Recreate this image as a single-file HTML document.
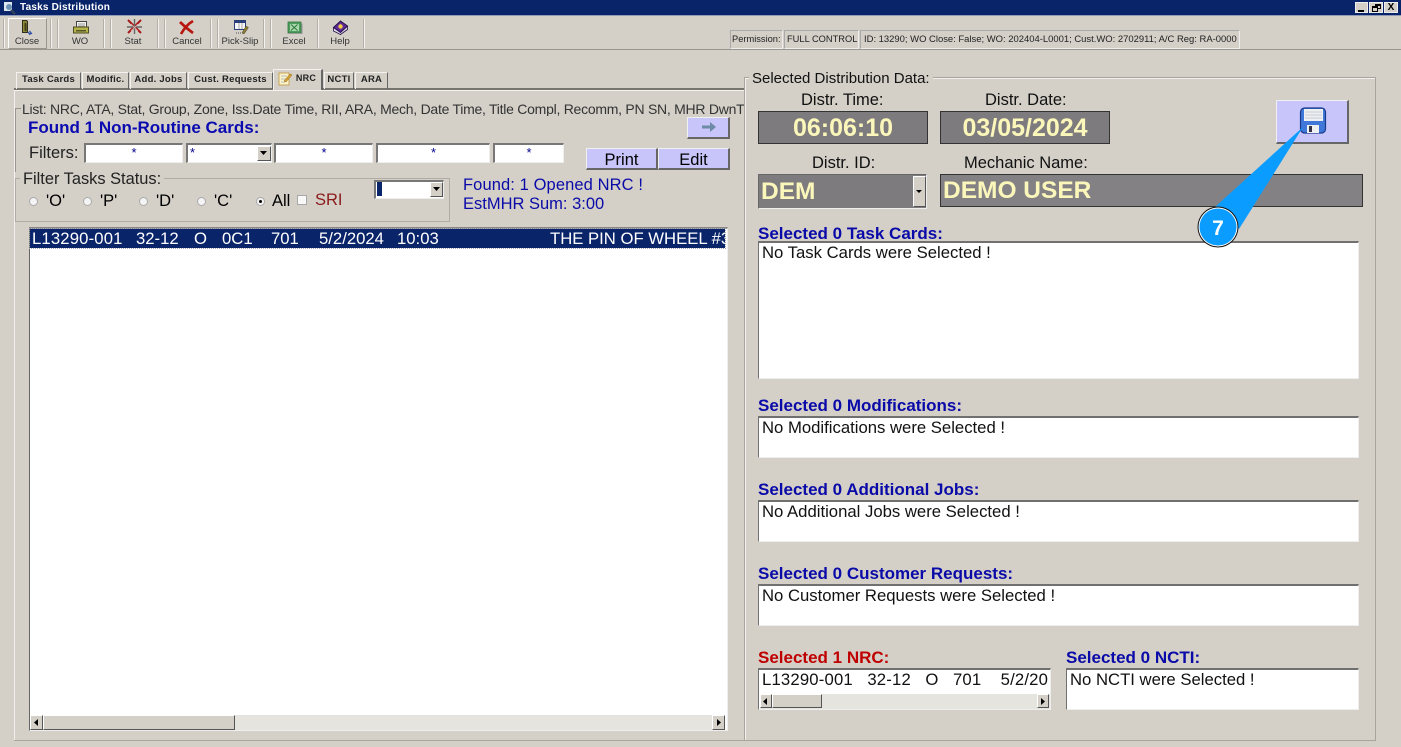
<!DOCTYPE html>
<html><head><meta charset="utf-8"><style>
html,body{margin:0;padding:0}
body{width:1401px;height:747px;position:relative;overflow:hidden;background:#d4d0c8;font-family:"Liberation Sans",sans-serif;color:#000}
div{position:absolute;box-sizing:border-box}
.t{position:absolute;white-space:nowrap;line-height:1}
.s{font-size:16.5px}
.m{font-size:16.5px;color:#111}
.r{position:absolute;top:231px;font-size:16.7px;color:#fff;white-space:nowrap;line-height:1}
.tb{font-size:9.5px;color:#333;text-align:center;width:50px;top:37px}
.sep{position:absolute;top:19px;height:29px;width:2px;border-left:1px solid #b4b0a8;border-right:1px solid #f4f2ee}
.tab{position:absolute;top:72px;height:17px;font-size:9.5px;font-weight:bold;letter-spacing:.25px;padding-top:1px;text-align:center;border-right:1px solid #666;border-top:1px solid #f4f2ee;border-left:1px solid #f4f2ee;white-space:nowrap;color:#222}
.inp{position:absolute;background:#fff;border:1px solid;border-color:#777 #eee #eee #777;border-width:2px 1px 1px 2px;color:#00008b;text-align:center;font-size:13px;line-height:16px}
.btn{position:absolute;background:#c8c5fa;border:1px solid;border-color:#f0f0f0 #666 #666 #f0f0f0;border-width:1px 2px 2px 1px;text-align:center;font-size:16.5px}
.rad{position:absolute;width:9px;height:9px;border-radius:50%;background:#f4f4f4;border:1px solid #aaa;top:197px}
.box{position:absolute;background:#fff;border:1px solid #eee;border-top:2px solid #707070;border-left:1px solid #707070;font-size:16.7px;padding:0 3px;white-space:nowrap;overflow:hidden;line-height:19px;color:#111}
.lbl{position:absolute;font-weight:bold;font-size:17px;color:#0a0aa8;white-space:nowrap;line-height:1}
.gr{position:absolute;background:#7e7b7e;border:1px solid #333;color:#fbf7bb;font-weight:bold}
.sb{position:absolute;background:#d4d0c8;border:1px solid;border-color:#fff #555 #555 #fff}
.hatch{position:absolute;background:#e6e4de}
</style></head><body>

<div style="left:0;top:0;width:1401px;height:15px;background:#0a246a"></div>
<div style="left:0;top:15px;width:1401px;height:1px;background:#8f9ab8"></div>
<svg style="position:absolute;left:2px;top:1px" width="14" height="14" viewBox="0 0 14 14"><rect x="2" y="1" width="8" height="9" fill="#dfe8ef"/><circle cx="7" cy="6" r="3" fill="#6f93b5"/><path d="M9 9l4 4" stroke="#345" stroke-width="2"/></svg>
<div class="t" style="left:20px;top:3px;font-size:10px;font-weight:bold;color:#fff;letter-spacing:.2px">Tasks Distribution</div>
<div style="left:1355px;top:2px;width:13px;height:11px;background:#d4d0c8;border:1px solid #eee"><div style="left:2px;top:7px;width:6px;height:2px;background:#000"></div></div>
<div style="left:1369px;top:2px;width:14px;height:11px;background:#d4d0c8;border:1px solid #eee"><div style="left:5px;top:1px;width:6px;height:5px;border:1px solid #000;border-top-width:2px"></div><div style="left:2px;top:3px;width:6px;height:6px;border:1px solid #000;border-top-width:2px;background:#d4d0c8"></div></div>
<div style="left:1384px;top:2px;width:14px;height:11px;background:#d4d0c8;border:1px solid #eee;font-size:10px;font-weight:bold;text-align:center;line-height:10px">X</div>

<!-- toolbar -->
<div style="left:0;top:49px;width:1401px;height:1px;background:#9a968e"></div>
<div style="left:8px;top:18px;width:39px;height:31px;border:1px solid;border-color:#fff #9a968e #9a968e #fff"></div>
<div class="sep" style="left:3px"></div><div class="sep" style="left:50px"></div><div class="sep" style="left:57px"></div><div class="sep" style="left:103px"></div><div class="sep" style="left:110px"></div><div class="sep" style="left:157px"></div><div class="sep" style="left:164px"></div><div class="sep" style="left:210px"></div><div class="sep" style="left:217px"></div><div class="sep" style="left:263px"></div><div class="sep" style="left:270px"></div><div class="sep" style="left:317px"></div><div class="sep" style="left:363px"></div>
<svg style="position:absolute;left:0;top:18px" width="370" height="20" viewBox="0 18 370 20">
<path d="M22.500 20.500h4l1 1v11h-5z" fill="#8f8a35" stroke="#2e2e1c"/><path d="M24.500 22.500l2 1v8l-2-1z" fill="#3d3d18"/><path d="M28 32q1 2 3 1.500M29.500 31l2 2.500-2.500 1" stroke="#2d4fa8" stroke-width="1.200" fill="none"/>
<path d="M76.500 27v-5.500h10V27" fill="#f2f2ee" stroke="#444"/><path d="M78 24h7M78 26h7" stroke="#999"/><rect x="73.500" y="27" width="15" height="6" fill="#b5b44a" stroke="#4d4d22"/><rect x="76" y="30" width="10" height="1.500" fill="#55552a"/>
<path d="M128 20l13 13M141 20l-13 13" stroke="#a81818" stroke-width="2"/><path d="M134.500 19v15M127 27h15" stroke="#666" stroke-width="1.400"/><path d="M131 24l7 7M138 24l-7 7" stroke="#e6b0b0" stroke-width=".8"/>
<path d="M180 22q6 6 13 11M193 21q-7 4-12 13" stroke="#b81710" stroke-width="2.700" fill="none"/>
<rect x="234.500" y="20.500" width="11" height="9" fill="#f6f6f6" stroke="#2a3f7a"/><path d="M234 22h12" stroke="#2a3f7a" stroke-width="2"/><path d="M239 23v6M242 23v6" stroke="#888" stroke-width=".7"/><path d="M242 33l4-7 2.500 1.500-4.500 6.500z" fill="#8d7a2c" stroke="#333" stroke-width=".4"/><path d="M236 33h5" stroke="#555" stroke-dasharray="1 1"/>
<rect x="288" y="22" width="13" height="11" fill="#4c9e5c" stroke="#35703f" stroke-width=".8"/><rect x="290" y="24" width="9" height="7" fill="#a9d6ab"/><path d="M291 24.500l6.500 6M297.500 24.500l-6.500 6" stroke="#2e7a3d"/><path d="M289 33.500h13v-10" stroke="#999" fill="none"/>
<path d="M333.500 28v3l7 3.500 7-5v-3z" fill="#e0dced" stroke="#241048" stroke-width=".8"/><path d="M333.500 27.500l7-6.500 7 5-7 6.500z" fill="#5f2a98" stroke="#241048"/><circle cx="340.500" cy="26.500" r="2.200" fill="#f0d040"/>
</svg>
<div class="t tb" style="left:2px">Close</div><div class="t tb" style="left:55px">WO</div><div class="t tb" style="left:108px">Stat</div><div class="t tb" style="left:162px">Cancel</div><div class="t tb" style="left:215px">Pick-Slip</div><div class="t tb" style="left:269px">Excel</div><div class="t tb" style="left:315px">Help</div>

<!-- status -->
<div style="left:730px;top:30px;width:53px;height:19px;border:1px solid;border-color:#aaa #eee #eee #aaa"></div>
<div style="left:784px;top:30px;width:75px;height:19px;border:1px solid;border-color:#aaa #eee #eee #aaa"></div>
<div style="left:860px;top:30px;width:380px;height:19px;border:1px solid;border-color:#aaa #eee #eee #aaa"></div>
<div class="t" style="left:732px;top:35px;font-size:9.300px;color:#222">Permission:</div>
<div class="t" style="left:787px;top:35px;font-size:9.300px;color:#222">FULL CONTROL</div>
<div class="t" style="left:864px;top:35px;font-size:9.450px;color:#222">ID: 13290; WO Close: False; WO: 202404-L0001; Cust.WO: 2702911; A/C Reg: RA-0000</div>

<!-- tabs -->
<div style="left:14px;top:88px;width:730px;height:2px;background:#77746c"></div>
<div style="left:14px;top:90px;width:730px;height:1px;background:#f4f2ee"></div>
<div class="tab" style="left:16px;width:65px">Task Cards</div>
<div class="tab" style="left:82px;width:47px">Modific.</div>
<div class="tab" style="left:130px;width:57px">Add. Jobs</div>
<div class="tab" style="left:188px;width:85px">Cust. Requests</div>
<div class="tab" style="left:273px;width:50px;top:69px;height:21px;background:#d4d0c8;font-size:9px;padding:3px 0 0 17px;border-right:2px solid #666">NRC</div>
<svg style="position:absolute;left:278px;top:71px" width="15" height="15" viewBox="0 0 15 15"><rect x="1" y="2" width="10" height="12" fill="#fbf3c8" stroke="#c9a55a"/><path d="M3 5h6M3 8h6M3 11h4" stroke="#bbb"/><path d="M6 10l6-7 2 1-6 7z" fill="#d9a22e" stroke="#8a6a20" stroke-width=".5"/></svg>
<div class="tab" style="left:324px;width:30px">NCTI</div>
<div class="tab" style="left:355px;width:33px">ARA</div>

<!-- left panel -->
<div style="left:14px;top:91px;width:1px;height:649px;background:#f2f0ec"></div>
<div style="left:14px;top:740px;width:730px;height:1px;background:#aaa69e"></div>
<div style="left:15px;top:108px;width:6px;height:1px;background:#9a968e"></div>
<div style="left:15px;top:108px;width:1px;height:64px;background:#9a968e"></div>
<div class="t" style="left:22px;top:102px;font-size:14px;color:#333;letter-spacing:-.26px;width:723px;overflow:hidden">List: NRC, ATA, Stat, Group, Zone, Iss.Date Time, RII, ARA, Mech, Date Time, Title Compl, Recomm, PN SN, MHR DwnT</div>
<div class="lbl" style="left:28px;top:119px;color:#0a0ab0">Found 1 Non-Routine Cards:</div>
<div class="btn" style="left:687px;top:117px;width:43px;height:22px"></div>
<svg style="position:absolute;left:700px;top:120px" width="18" height="14" viewBox="0 0 18 14"><path d="M2 5.500h8V2l6 5-6 5V8.500H2z" fill="#6d8aa6"/></svg>
<div class="t" style="left:29px;top:145px;font-size:16.500px;color:#222">Filters:</div>
<div class="inp" style="left:84px;top:143px;width:99px;height:20px">*</div>
<div class="inp" style="left:186px;top:143px;width:86px;height:20px;text-align:left;padding-left:2px">*</div>
<div class="sb" style="left:257px;top:146px;width:14px;height:15px"></div>
<svg style="position:absolute;left:260px;top:151px" width="8" height="5"><path d="M0 0h7L3.500 4z" fill="#000"/></svg>
<div class="inp" style="left:274px;top:143px;width:99px;height:20px">*</div>
<div class="inp" style="left:376px;top:143px;width:114px;height:20px">*</div>
<div class="inp" style="left:493px;top:143px;width:71px;height:20px">*</div>
<div class="btn" style="left:586px;top:148px;width:72px;height:22px;padding-top:2px">Print</div>
<div class="btn" style="left:658px;top:148px;width:72px;height:22px;padding-top:2px">Edit</div>

<div style="left:15px;top:178px;width:435px;height:44px;border:1px solid #b0aca4"></div>
<div class="t" style="left:20px;top:171px;font-size:16.400px;background:#d4d0c8;padding:0 3px;color:#222">Filter Tasks Status:</div>
<div class="rad" style="left:29px"></div><div class="t s" style="left:46px;top:193px">'O'</div>
<div class="rad" style="left:83px"></div><div class="t s" style="left:100px;top:193px">'P'</div>
<div class="rad" style="left:139px"></div><div class="t s" style="left:156px;top:193px">'D'</div>
<div class="rad" style="left:197px"></div><div class="t s" style="left:214px;top:193px">'C'</div>
<div class="rad" style="left:256px"></div><div style="left:259px;top:200px;width:3px;height:3px;background:#000;border-radius:50%"></div><div class="t s" style="left:272px;top:193px">All</div>
<div style="left:297px;top:195px;width:10px;height:10px;background:#f8f8f8;border:1px solid #a8a8a8"></div>
<div class="t s" style="left:315px;top:192px;color:#8b1a1a">SRI</div>
<div class="inp" style="left:374px;top:180px;width:70px;height:19px"></div>
<div style="left:377px;top:182px;width:5px;height:14px;background:#0a246a"></div>
<div class="sb" style="left:430px;top:182px;width:13px;height:15px"></div>
<svg style="position:absolute;left:433px;top:187px" width="8" height="5"><path d="M0 0h7L3.500 4z" fill="#000"/></svg>
<div class="t s" style="left:463px;top:177px;color:#0a0aa8;letter-spacing:.1px">Found: 1 Opened NRC !</div>
<div class="t s" style="left:463px;top:196px;color:#0a0aa8">EstMHR Sum: 3:00</div>

<!-- list -->
<div style="left:29px;top:227px;width:699px;height:504px;background:#fff;border:1px solid #eee;border-top:2px solid #888;border-left:1px solid #666"></div>
<div style="left:30px;top:229px;width:695px;height:19px;background:#0a246a;outline:1px dotted #aab"></div>
<div class="r" style="left:32px;letter-spacing:.15px">L13290-001</div>
<div class="r" style="left:136px">32-12</div>
<div class="r" style="left:194px">O</div>
<div class="r" style="left:222px">0C1</div>
<div class="r" style="left:271px">701</div>
<div class="r" style="left:319px">5/2/2024</div>
<div class="r" style="left:397px">10:03</div>
<div class="r" style="left:550px;width:175px;overflow:hidden">THE PIN OF WHEEL #3</div>
<div class="hatch" style="left:30px;top:715px;width:695px;height:15px"></div>
<div class="sb" style="left:30px;top:715px;width:13px;height:15px"></div>
<svg style="position:absolute;left:34px;top:719px" width="6" height="8"><path d="M4 0v7L0 3.500z" fill="#000"/></svg>
<div class="sb" style="left:43px;top:715px;width:192px;height:15px"></div>
<div class="sb" style="left:712px;top:715px;width:13px;height:15px"></div>
<svg style="position:absolute;left:717px;top:719px" width="6" height="8"><path d="M0 0v7l4-3.500z" fill="#000"/></svg>

<!-- right group -->
<div style="left:744px;top:77px;width:632px;height:664px;border:1px solid #a8a49c;box-shadow:inset 1px 1px 0 #f4f2ee"></div>
<div class="t" style="left:749px;top:71px;font-size:15px;background:#d4d0c8;padding:0 3px;color:#111">Selected Distribution Data:</div>
<div class="t m" style="left:801px;top:92px">Distr. Time:</div>
<div class="t m" style="left:985px;top:92px">Distr. Date:</div>
<div class="gr" style="left:758px;top:111px;width:170px;height:33px;font-size:25px;text-align:center;line-height:32px">06:06:10</div>
<div class="gr" style="left:940px;top:111px;width:170px;height:33px;font-size:25px;text-align:center;line-height:32px">03/05/2024</div>
<div class="t m" style="left:812px;top:155px">Distr. ID:</div>
<div class="t m" style="left:964px;top:155px">Mechanic Name:</div>
<div class="gr" style="left:758px;top:174px;width:169px;height:35px;font-size:24.500px;line-height:33px;padding-left:2px;border-color:#666 #eee #eee #666">DEM</div>
<div class="sb" style="left:913px;top:176px;width:13px;height:31px"></div>
<svg style="position:absolute;left:916px;top:190px" width="7" height="4"><path d="M0 0h6L3 3z" fill="#000"/></svg>
<div class="gr" style="left:940px;top:174px;width:423px;height:33px;font-size:24.500px;line-height:31px;padding-left:2px;background:#848184">DEMO USER</div>

<div class="btn" style="left:1276px;top:100px;width:73px;height:44px"></div>
<svg style="position:absolute;left:1299px;top:107px" width="28" height="27" viewBox="0 0 28 27"><rect x="1.500" y="1" width="25" height="25" rx="4" fill="#3f78d8" stroke="#1a3a8c" stroke-width="1.200"/><rect x="5" y="2" width="19" height="12" fill="#eef0f2"/><path d="M6 5h17M6 8h17M6 11h17" stroke="#c8ccd2"/><rect x="8" y="18" width="12" height="8" fill="#eef0f2"/><rect x="10" y="19" width="3" height="6" fill="#334"/></svg>

<div class="lbl" style="left:758px;top:225px">Selected 0 Task Cards:</div>
<div class="box" style="left:758px;top:241px;width:601px;height:138px">No Task Cards were Selected !</div>
<div class="lbl" style="left:758px;top:397px">Selected 0 Modifications:</div>
<div class="box" style="left:758px;top:416px;width:601px;height:42px">No Modifications were Selected !</div>
<div class="lbl" style="left:758px;top:481px">Selected 0 Additional Jobs:</div>
<div class="box" style="left:758px;top:500px;width:601px;height:42px">No Additional Jobs were Selected !</div>
<div class="lbl" style="left:758px;top:565px">Selected 0 Customer Requests:</div>
<div class="box" style="left:758px;top:584px;width:601px;height:42px">No Customer Requests were Selected !</div>
<div class="lbl" style="left:758px;top:649px;color:#c00000">Selected 1 NRC:</div>
<div class="lbl" style="left:1066px;top:649px">Selected 0 NCTI:</div>
<div class="box" style="left:758px;top:668px;width:293px;height:42px;white-space:pre;letter-spacing:.18px">L13290-001   32-12   O   701    5/2/20</div>
<div class="hatch" style="left:760px;top:694px;width:290px;height:15px"></div>
<div class="sb" style="left:760px;top:694px;width:12px;height:14px"></div>
<svg style="position:absolute;left:763px;top:698px" width="6" height="8"><path d="M4 0v7L0 3.500z" fill="#000"/></svg>
<div class="sb" style="left:772px;top:694px;width:50px;height:14px"></div>
<div class="sb" style="left:1037px;top:694px;width:12px;height:14px"></div>
<svg style="position:absolute;left:1041px;top:698px" width="6" height="8"><path d="M0 0v7l4-3.500z" fill="#000"/></svg>
<div class="box" style="left:1066px;top:668px;width:293px;height:42px">No NCTI were Selected !</div>

<!-- callout -->
<svg style="position:absolute;left:1190px;top:120px" width="130" height="130" viewBox="0 0 130 130">
<path d="M25 87L113 7 49 109z" fill="#0b9cff"/>
<circle cx="28" cy="107" r="20.500" fill="#111"/>
<circle cx="28" cy="107" r="19.500" fill="#fff"/>
<circle cx="28" cy="107" r="18.500" fill="#0b9cff"/>
<text x="28" y="115" text-anchor="middle" font-family="Liberation Sans, sans-serif" font-weight="bold" font-size="21" fill="#fff">7</text>
</svg>
</body></html>
